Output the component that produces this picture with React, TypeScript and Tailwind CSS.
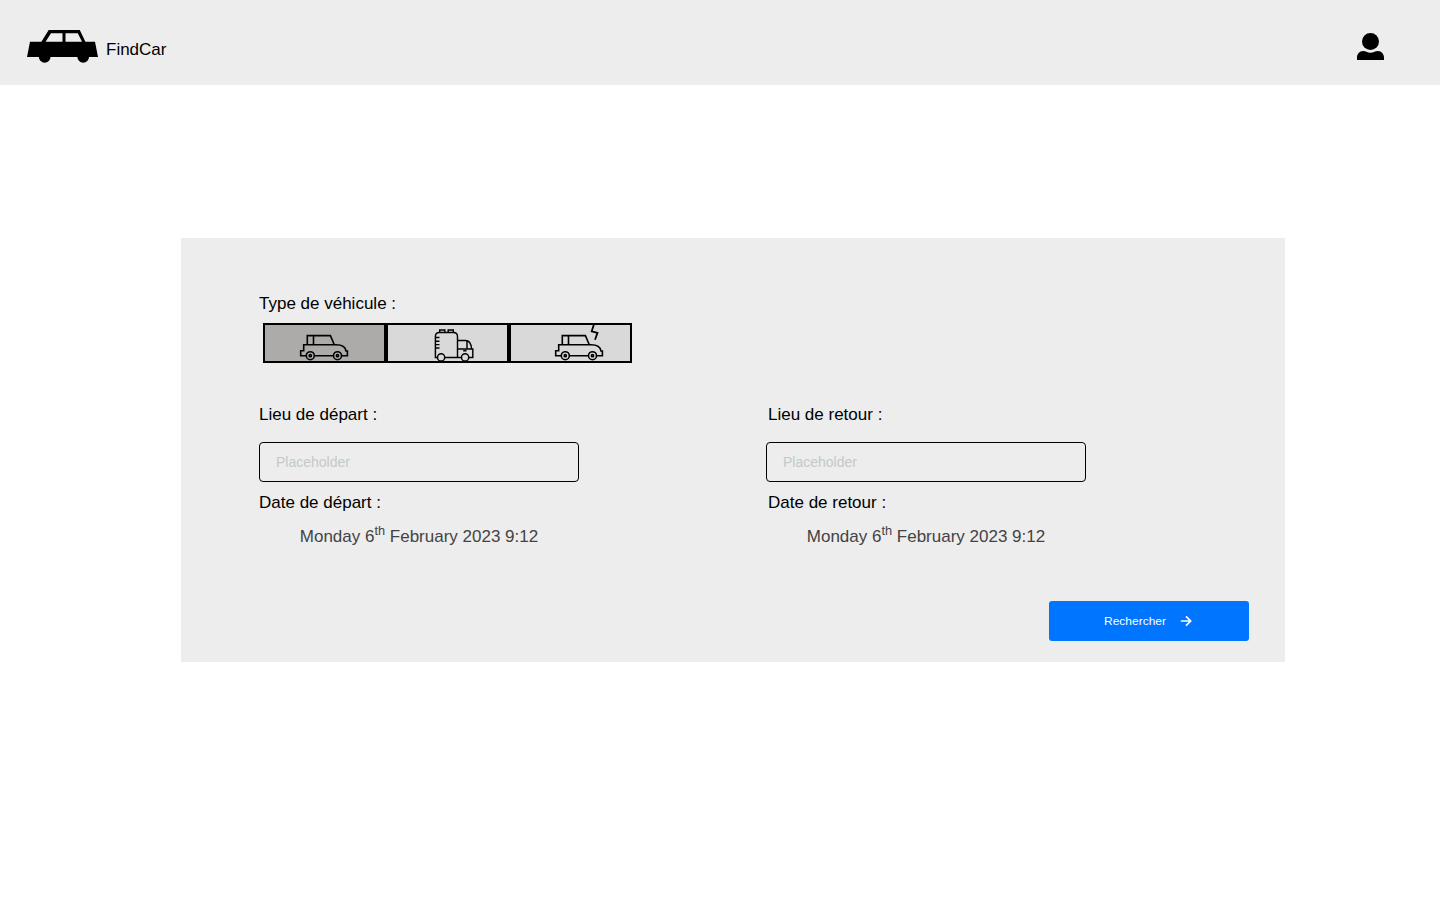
import React from "react";

function CarLogo() {
  return (
    <svg className="h-[34px] w-[72px]" viewBox="27 30 72 34">
      <path
        fillRule="evenodd"
        d="M48.7 30H79.8L85.4 41.7H95L98 57H27L30 41.7H41.4ZM51 33.2L45.6 41.7H62.5V33.2ZM65.5 33.2V41.7H82L77.8 33.2Z"
      />
      <circle cx="44.7" cy="57" r="5.8" />
      <circle cx="83.2" cy="57" r="5.8" />
    </svg>
  );
}

function UserIcon() {
  return (
    <svg className="h-7 w-7" viewBox="1357 33 28 28">
      <circle cx="1370.5" cy="41.5" r="8.5" />
      <path d="M1357 60V57.5C1357 54 1359.5 51.3 1363 51.1C1366 51.1 1367 52.8 1370.5 52.8C1374 52.8 1375 51.1 1378 51.1C1381.5 51.3 1384 54 1384 57.5V60Z" />
    </svg>
  );
}

function CarShape() {
  return (
    <>
      <path d="M306.2 355.7H300.7V350.7H303.7V344.7H335C341 344.5 345.5 346 346 351H347.4V355.7H341.5M333.2 355.7H314.5" />
      <path d="M307.3 344.7V335.6H330.4L334.3 344.7M313.5 335.6V344.7" />
      <circle cx="310.3" cy="355.7" r="4" />
      <circle cx="310.3" cy="355.7" r="1.1" />
      <circle cx="337.5" cy="355.7" r="4" />
      <circle cx="337.5" cy="355.7" r="1.1" />
    </>
  );
}

function CarIcon() {
  return (
    <svg className="h-9 w-[119px]" viewBox="265 325 119 36" fill="none" stroke="black" strokeWidth="1.6">
      <CarShape />
    </svg>
  );
}

function TruckIcon() {
  return (
    <svg className="h-9 w-[119px]" viewBox="388 325 119 36" fill="none" stroke="black" strokeWidth="1.45">
      <path d="M437.2 357.4H435.4V336.5Q435.4 332.5 439.4 332.5H453.5Q457.5 332.5 457.5 336.5V357.4M445 357.4H461.3M468.9 357.4H472.8V349H457.5M457.5 340.4H465.5Q471 340.4 471.6 349M467 340.4V349" />
      <path d="M439.7 332.3V330H444.8V332.3M448.2 332.3V330H453.3V332.3" />
      <path d="M435.4 337.5H439.5M435.4 341.2H439.5M435.4 344.6H439.5M435.4 348H439.5M463.2 350.8H466.5" />
      <circle cx="441.1" cy="357.4" r="3.6" />
      <circle cx="465.1" cy="357.4" r="3.6" />
    </svg>
  );
}

function ElectricCarIcon() {
  return (
    <svg className="h-9 w-[119px]" viewBox="511 325 119 36" fill="none" stroke="black" strokeWidth="1.6">
      <g transform="translate(255 0)">
        <CarShape />
      </g>
      <path strokeWidth="1.8" d="M593.9 324.5L591.7 331.3L597.5 332.8L595 339.7" />
    </svg>
  );
}

function Trip({ place, date, labelClass }: { place: string; date: string; labelClass: string }) {
  return (
    <div className="w-80">
      <label className={`block h-6 leading-6 ${labelClass}`}>{place}</label>
      <input
        type="text"
        placeholder="Placeholder"
        className="mt-[15px] block h-10 w-full rounded border border-black bg-transparent px-4 text-sm placeholder:text-[#c3c9c9]"
      />
      <div className={`mt-[9px] h-6 leading-6 ${labelClass}`}>{date}</div>
      <div className="mt-2.5 h-6 text-center leading-6 text-[#434343]">
        Monday 6<sup className="top-[-7px] text-[12.75px]">th</sup> February 2023 9:12
      </div>
    </div>
  );
}

export default function App() {
  return (
    <div className="min-h-screen bg-white font-['Liberation_Sans',Arial,sans-serif] text-[17px] text-black">
      <header className="flex h-[85px] items-start justify-between bg-[#ededed] pl-[27px] pr-[55px]">
        <div className="flex pt-[30px]">
          <CarLogo />
          <span className="ml-[7px] mt-2 leading-6">FindCar</span>
        </div>
        <button className="mt-[33px]" aria-label="Profil">
          <UserIcon />
        </button>
      </header>
      <main className="ml-[181px] mt-[153px] flex h-[424px] w-[1104px] flex-col bg-[#ededed] pl-[78px] pr-9 pt-[54px]">
        <div className="h-6 leading-6">Type de véhicule :</div>
        <div className="ml-1 mt-[7px] flex">
          <button className="h-10 w-[123px] border-2 border-black bg-[#acaba9]"><CarIcon /></button>
          <button className="h-10 w-[123px] border-2 border-black bg-[#d9d9d9]"><TruckIcon /></button>
          <button className="h-10 w-[123px] border-2 border-black bg-[#d9d9d9]"><ElectricCarIcon /></button>
        </div>
        <div className="mt-10 flex gap-[187px]">
          <Trip place="Lieu de départ :" date="Date de départ :" labelClass="pl-0" />
          <Trip place="Lieu de retour :" date="Date de retour :" labelClass="pl-0.5" />
        </div>
        <button className="mt-[52px] flex h-10 w-[200px] items-center self-end rounded-[3px] bg-[#0075ff] pl-[55px] text-[12px] text-white">
          <span className="w-[62px] scale-y-[0.92] text-left">Rechercher</span>
          <svg className="ml-[14px] h-3 w-3" viewBox="0 0 12 12" fill="none" stroke="white" strokeWidth="1.7">
            <path d="M0.8 6H10.5M6 1.3L10.7 6L6 10.7" />
          </svg>
        </button>
      </main>
    </div>
  );
}
